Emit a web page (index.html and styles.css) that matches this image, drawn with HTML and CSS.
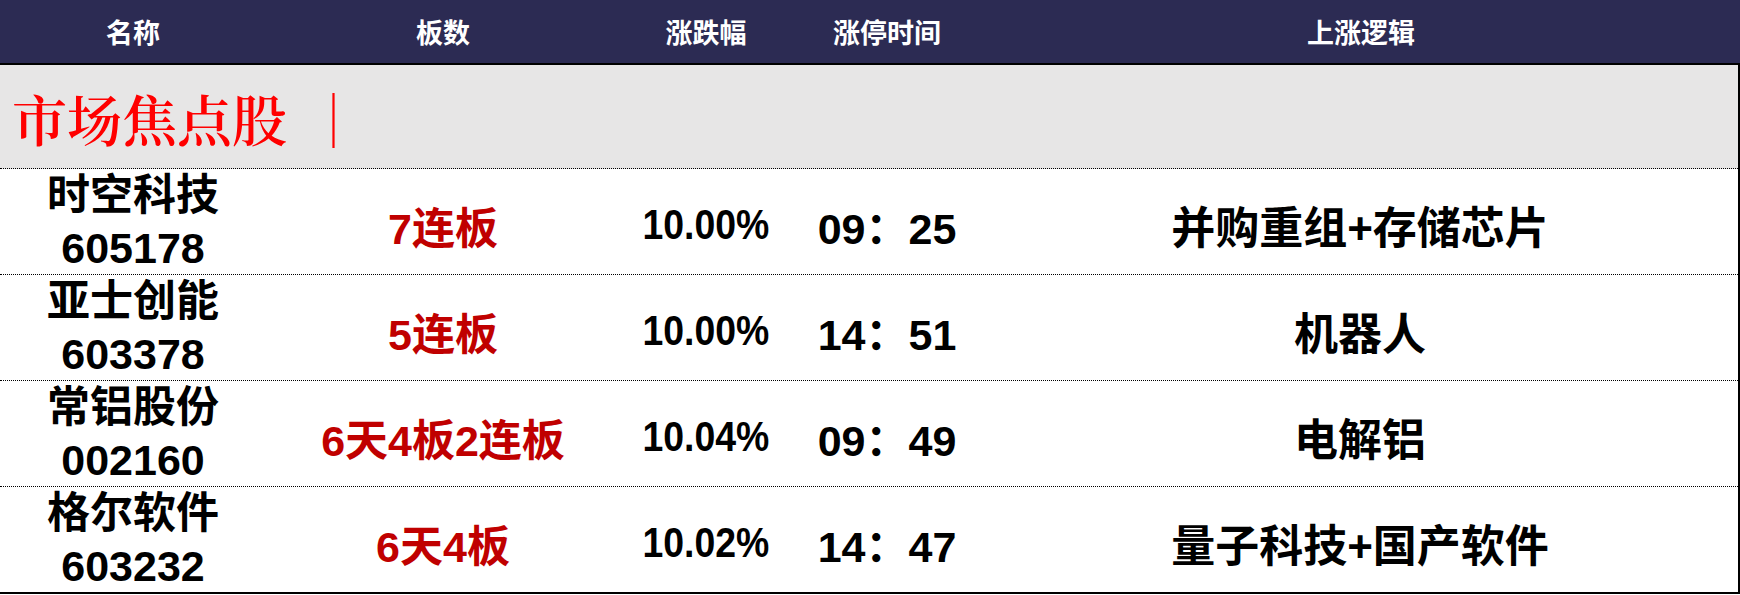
FILE: index.html
```html
<!DOCTYPE html>
<html lang="zh-CN">
<head>
<meta charset="utf-8">
<title>市场焦点股</title>
<link rel="stylesheet" href="styles.css">
</head>
<body>
<div class="sheet">
  <div class="head">
    <div class="hc">名称</div>
    <div class="hc">板数</div>
    <div class="hc">涨跌幅</div>
    <div class="hc">涨停时间</div>
    <div class="hc">上涨逻辑</div>
  </div>
  <div class="body">
    <div class="band"><span class="title">市场焦点股</span><span class="bar">｜</span></div>
    <div class="row">
      <div class="cell name"><span class="nm">时空科技</span><span class="code">605178</span></div>
      <div class="cell red">7连板</div>
      <div class="cell pct"><span class="narrow">10.00%</span></div>
      <div class="cell time">09：25</div>
      <div class="cell logic">并购重组+存储芯片</div>
    </div>
    <div class="row">
      <div class="cell name"><span class="nm">亚士创能</span><span class="code">603378</span></div>
      <div class="cell red">5连板</div>
      <div class="cell pct"><span class="narrow">10.00%</span></div>
      <div class="cell time">14：51</div>
      <div class="cell logic">机器人</div>
    </div>
    <div class="row">
      <div class="cell name"><span class="nm">常铝股份</span><span class="code">002160</span></div>
      <div class="cell red">6天4板2连板</div>
      <div class="cell pct"><span class="narrow">10.04%</span></div>
      <div class="cell time">09：49</div>
      <div class="cell logic">电解铝</div>
    </div>
    <div class="row last">
      <div class="cell name"><span class="nm">格尔软件</span><span class="code">603232</span></div>
      <div class="cell red">6天4板</div>
      <div class="cell pct"><span class="narrow">10.02%</span></div>
      <div class="cell time">14：47</div>
      <div class="cell logic">量子科技+国产软件</div>
    </div>
  </div>
</div>
</body>
</html>
```

FILE: styles.css
```css
html, body {
  margin: 0;
  padding: 0;
  background: #ffffff;
}

.sheet {
  width: 1740px;
  font-family: "Liberation Sans", "Noto Sans CJK SC", sans-serif;
}

.head {
  display: grid;
  grid-template-columns: 266px 354px 172px 190px 1fr;
  height: 63px;
  background: #2c2b53;
  color: #ffffff;
  font-size: 27px;
  font-weight: 700;
}

.hc {
  display: flex;
  align-items: center;
  justify-content: center;
}

.body {
  width: 1738px;
  border-top: 2px solid #000;
  border-right: 2px solid #000;
  border-bottom: 2px solid #000;
}

.band {
  background: #e7e6e6;
  border-bottom: 1px dotted #000;
  display: flex;
  align-items: center;
  padding: 2px 0 0 12px;
  height: 101px;
  color: #ff0000;
  font-family: "Noto Serif CJK SC", "Liberation Serif", "Noto Sans CJK SC", serif;
  font-size: 55px;
  font-weight: 600;
}

.bar {
  margin-left: 19px;
  font-weight: 400;
}

.row {
  display: grid;
  grid-template-columns: 266px 354px 172px 190px 1fr;
  height: 105px;
  border-bottom: 1px dotted #000;
  font-size: 43px;
  font-weight: 700;
  color: #000;
}

.row.last {
  border-bottom: none;
}

.cell {
  display: flex;
  align-items: center;
  justify-content: center;
  white-space: nowrap;
  padding-top: 5px;
}

.cell.name {
  flex-direction: column;
  line-height: 53px;
  padding-top: 0;
}

.cell.red {
  color: #c00000;
}

.narrow {
  display: inline-block;
  transform: scaleX(0.87);
}

.cell.logic {
  font-size: 44px;
}
```
